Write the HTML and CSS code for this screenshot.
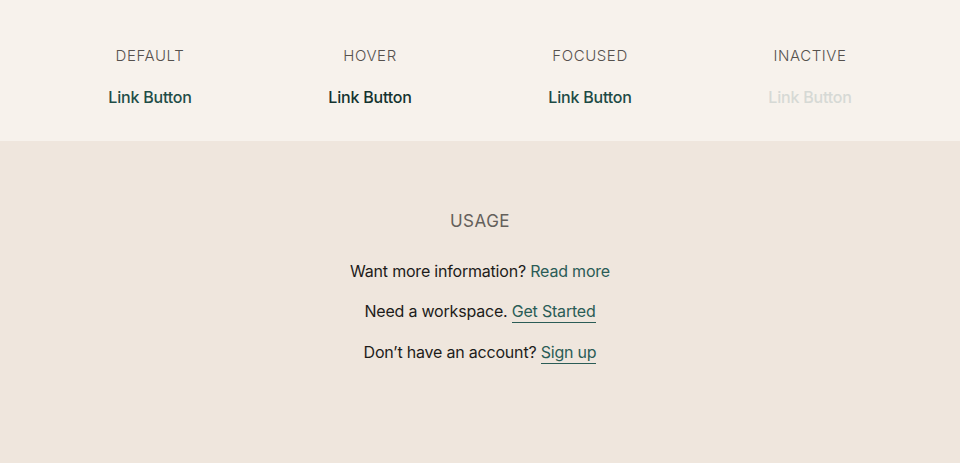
FILE: index.html
```html
<!DOCTYPE html>
<html lang="en">

<head>
    <meta charset="UTF-8">
    <meta name="viewport" content="width=device-width, initial-scale=1.0">
    <title>Link Button</title>
    <link rel="stylesheet" href="styles.css">
</head>

<body>
    <div id="states">
        <div class="state">
            <div class="state_label">DEFAULT</div>
            <a class="link_bt" href="#">Link Button</a>
        </div>
        <div class="state">
            <div class="state_label">HOVER</div>
            <a class="link_bt hover" href="#">Link Button</a>
        </div>
        <div class="state">
            <div class="state_label">FOCUSED</div>
            <a class="link_bt focused" href="#">Link Button</a>
        </div>
        <div class="state">
            <div class="state_label">INACTIVE</div>
            <a class="link_bt inactive">Link Button</a>
        </div>
    </div>

    <div id="usage">
        <div class="usage_title">USAGE</div>
        <p class="usage_line">Want more information? <a class="usage_link" href="#">Read more</a></p>
        <p class="usage_line">Need a workspace. <a class="usage_link underline" href="#">Get Started</a></p>
        <p class="usage_line">Don’t have an account? <a class="usage_link underline" href="#">Sign up</a></p>
    </div>
</body>

</html>
```

FILE: styles.css
```css
body {
    margin: 0;
    font-family: Inter, "Noto Sans", sans-serif;
    background: #efe6dd;
}

#states {
    display: grid;
    grid-template-columns: repeat(4, 1fr);
    padding: 0 40px;
    height: 141px;
    background: #f7f2ec;
}

.state {
    display: flex;
    flex-direction: column;
    align-items: center;
    padding-top: 46px;
}

.state_label {
    font-size: 15px;
    font-weight: 300;
    letter-spacing: 0.6px;
    line-height: 20px;
    color: #55514d;
}

.link_bt {
    margin-top: 21px;
    font-size: 16px;
    font-weight: 500;
    line-height: 20px;
    letter-spacing: -0.2px;
    color: #1f4d47;
    text-decoration: none;
}

.link_bt.hover {
    color: #14332f;
}

.link_bt.focused {
    color: #1d4a45;
}

.link_bt.inactive {
    color: #d6d9d5;
}

#usage {
    display: flex;
    flex-direction: column;
    align-items: center;
    padding-top: 70px;
    height: 252px;
}

.usage_title {
    font-size: 17px;
    font-weight: 400;
    letter-spacing: 0.5px;
    line-height: 20px;
    color: #64605b;
    margin-bottom: 30px;
}

.usage_line {
    margin: 0 0 20px;
    font-size: 16px;
    line-height: 20px;
    letter-spacing: -0.2px;
    color: #1d1c1a;
}

.usage_line:last-child {
    margin-top: 1px;
}

.usage_link {
    color: #2a5c56;
    text-decoration: none;
}

.usage_link.underline {
    border-bottom: 1px solid #2a5c56;
    padding-bottom: 1px;
}
```
